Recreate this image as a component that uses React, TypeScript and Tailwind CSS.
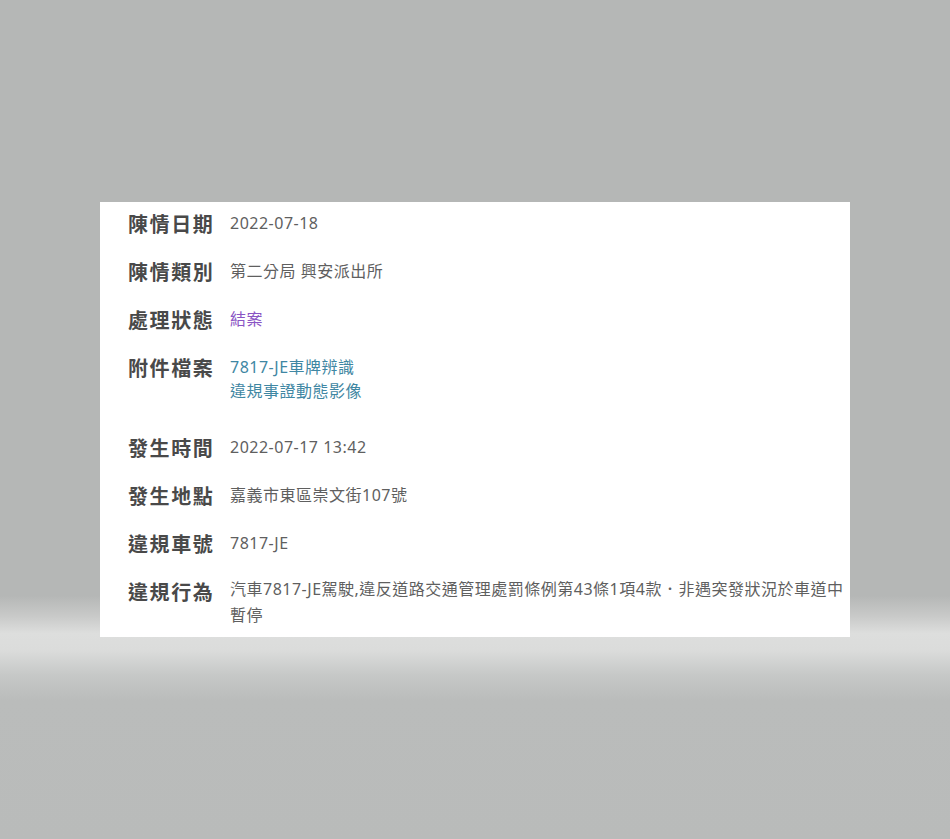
import React from "react";

const font = "font-['Noto_Sans','Noto_Sans_CJK_TC',sans-serif]";

function Label({ children }: { children: React.ReactNode }) {
  return (
    <div className="w-[102px] shrink-0 h-[24px] text-[20px] leading-[28px] font-bold tracking-[1.6px] text-[#494949] whitespace-nowrap">
      {children}
    </div>
  );
}

export default function App() {
  return (
    <div
      className={`${font} w-full min-h-[839px] pt-[202px] pl-[100px] bg-[linear-gradient(to_bottom,#b5b7b6_0%,#b5b7b6_71%,#c9cac9_73.5%,#dddedd_75.5%,#dbdcdb_77.5%,#c6c8c7_80.5%,#babcbb_83.5%,#b9bbba_100%)]`}
    >
      <div className="w-[750px] bg-white pl-[28px] pr-[6px] pt-[9px] pb-[9px] text-[16px] tracking-[0.5px] text-[#5f5f5f]">
        <div className="flex mb-[24px]">
          <Label>陳情日期</Label>
          <div className="flex-1 leading-[24px]">2022-07-18</div>
        </div>
        <div className="flex mb-[24px]">
          <Label>陳情類別</Label>
          <div className="flex-1 leading-[24px]">第二分局 興安派出所</div>
        </div>
        <div className="flex mb-[24px]">
          <Label>處理狀態</Label>
          <div className="flex-1 leading-[24px] text-[#8a55c4]">結案</div>
        </div>
        <div className="flex mb-[32px]">
          <Label>附件檔案</Label>
          <div className="flex-1 flex flex-col leading-[24px] text-[#3f87a3]">
            <span>7817-JE車牌辨識</span>
            <span>違規事證動態影像</span>
          </div>
        </div>
        <div className="flex mb-[24px]">
          <Label>發生時間</Label>
          <div className="flex-1 leading-[24px]">2022-07-17 13:42</div>
        </div>
        <div className="flex mb-[24px]">
          <Label>發生地點</Label>
          <div className="flex-1 leading-[24px]">嘉義市東區崇文街107號</div>
        </div>
        <div className="flex mb-[24px]">
          <Label>違規車號</Label>
          <div className="flex-1 leading-[24px]">7817-JE</div>
        </div>
        <div className="flex">
          <Label>違規行為</Label>
          <div className="flex-1 -mt-[3px] leading-[26px]">
            汽車7817-JE駕駛,違反道路交通管理處罰條例第43條1項4款．非遇突發狀況於車道中暫停
          </div>
        </div>
      </div>
    </div>
  );
}
